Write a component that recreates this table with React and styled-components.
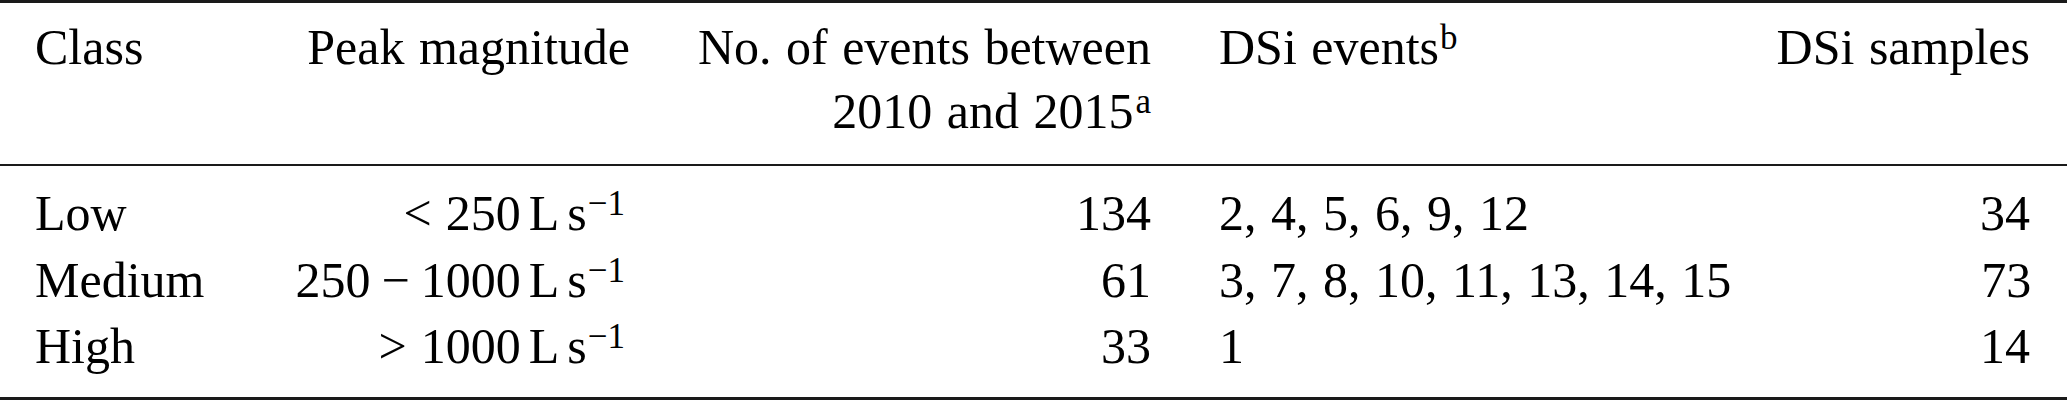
import React from "react";
import styled, { createGlobalStyle } from "styled-components";

const Global = createGlobalStyle`
  html, body { margin: 0; padding: 0; background: #fff; }
  body { font-family: "Liberation Serif", "DejaVu Serif", serif; color: #000; }
`;

const Table = styled.div`
  width: 2067px;
  border-top: 3px solid #1a1a1a;
  border-bottom: 3px solid #1a1a1a;
  box-sizing: border-box;
  font-family: "Liberation Serif", "DejaVu Serif", serif;
  font-size: 50px;
  word-spacing: 2px;
`;

const Row = styled.div`
  display: grid;
  grid-template-columns: 245px 350px 521px 1fr 300px;
  padding: 0 37px 0 35px;
  line-height: ${(p) => p.$lh || 66.5}px;
`;

const Head = styled.div`
  padding: 12px 0 21px;
  border-bottom: 2px solid #1a1a1a;
`;

const Body = styled.div`
  padding: 14px 0 17.5px;
`;

const Cell = styled.div`
  text-align: ${(p) => p.$align || "left"};
  padding-left: ${(p) => p.$pl || 0}px;
  padding-right: ${(p) => p.$pr || 0}px;
  white-space: nowrap;
`;

const Sup = styled.sup`
  font-size: 0.7em;
  line-height: 0;
  vertical-align: ${(p) => p.$raise || 0.42}em;
  margin-left: ${(p) => p.$ml || 0}px;
`;

const Space = styled.span`
  display: inline-block;
  width: ${(p) => p.$w}px;
`;

const Unit = ({ children }) => (
  <>
    {children}
    <Space $w={8} />L<Space $w={8} />s
    <Sup $ml={1}>{"\u22121"}</Sup>
  </>
);

const rows = [
  {
    c: "Low",
    p: (
      <Unit>
        {"<"}
        <Space $w={14} />
        250
      </Unit>
    ),
    n: "134",
    e: "2, 4, 5, 6, 9, 12",
    s: "34",
  },
  {
    c: "Medium",
    p: (
      <Unit>
        250
        <Space $w={11} />
        {"\u2212"}
        <Space $w={11} />
        1000
      </Unit>
    ),
    n: "61",
    e: "3, 7, 8, 10, 11, 13, 14, 15",
    s: "73",
  },
  {
    c: "High",
    p: (
      <Unit>
        {">"}
        <Space $w={14} />
        1000
      </Unit>
    ),
    n: "33",
    e: "1",
    s: "14",
  },
];

export default function App() {
  return (
    <>
      <Global />
      <Table>
        <Head>
          <Row $lh={64}>
            <Cell>Class</Cell>
            <Cell $align="right">Peak magnitude</Cell>
            <Cell $align="right">
              No. of events between
              <br />
              2010 and 2015<Sup $ml={2}>a</Sup>
            </Cell>
            <Cell $pl={68}>
              DSi events<Sup $ml={1}>b</Sup>
            </Cell>
            <Cell $align="right">DSi samples</Cell>
          </Row>
        </Head>
        <Body>
          {rows.map((r) => (
            <Row key={r.c}>
              <Cell>{r.c}</Cell>
              <Cell $align="right" $pr={5}>{r.p}</Cell>
              <Cell $align="right">{r.n}</Cell>
              <Cell $pl={68}>{r.e}</Cell>
              <Cell $align="right">{r.s}</Cell>
            </Row>
          ))}
        </Body>
      </Table>
    </>
  );
}
